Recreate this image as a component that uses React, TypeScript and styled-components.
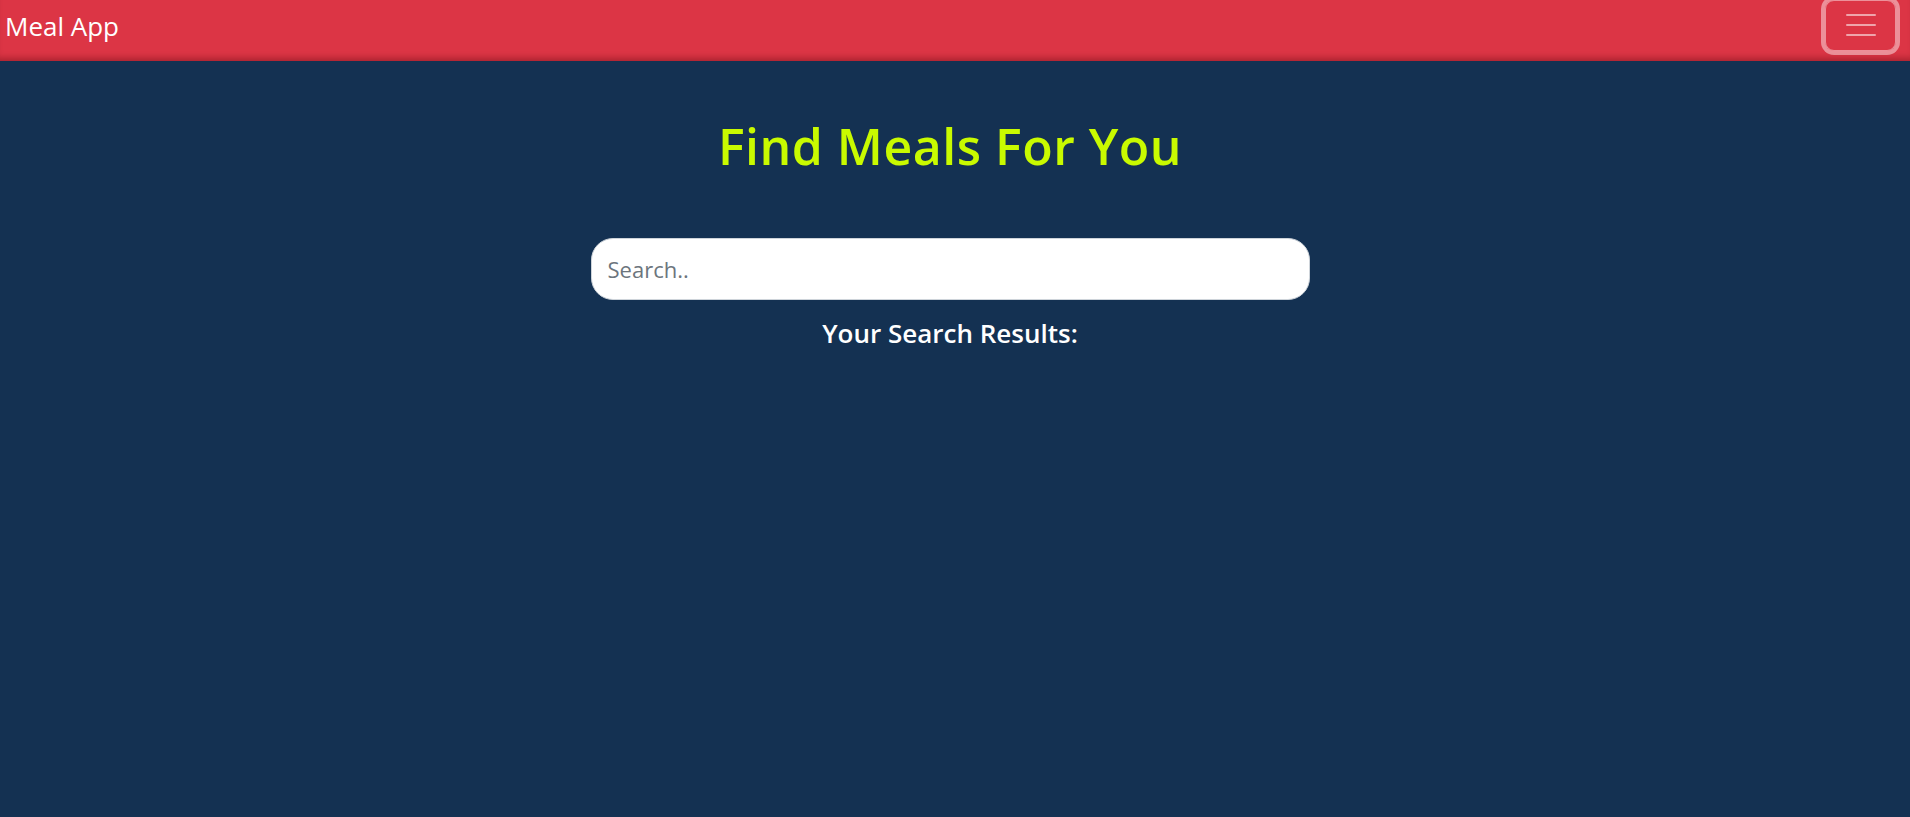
import React from "react";
import styled, { createGlobalStyle } from "styled-components";

const Global = createGlobalStyle`
  html, body { margin: 0; padding: 0; background: #143152; }
  body { font-family: "Open Sans", sans-serif; }
  * { box-sizing: border-box; }
`;

const Page = styled.div`
  min-height: 817px;
  background: #143152;
  display: flex;
  flex-direction: column;
`;

const NavBar = styled.nav`
  height: 61px;
  background: #dc3545;
  display: flex;
  align-items: center;
  justify-content: space-between;
  padding: 0 10px 0 5px;
  box-shadow: inset 0 -7px 6px -4px rgba(80, 0, 10, 0.35);
`;

const Brand = styled.a`
  color: #ffffff;
  font-family: "Open Sans", sans-serif;
  font-size: 26px;
  font-weight: 500;
  text-decoration: none;
  margin-top: -10px;
`;

const Toggler = styled.button`
  width: 71px;
  height: 51px;
  margin-top: -11px;
  border: 1px solid rgba(255, 255, 255, 0.45);
  border-radius: 9px;
  background: transparent;
  box-shadow: 0 0 0 4px rgba(255, 255, 255, 0.45);
  display: flex;
  flex-direction: column;
  align-items: center;
  justify-content: center;
  gap: 8px;
  padding: 0;
  margin-right: 4px;
  cursor: pointer;
`;

const Bar = styled.span`
  display: block;
  width: 30px;
  height: 2px;
  background: rgba(255, 255, 255, 0.55);
  border-radius: 1px;
`;

const Main = styled.main`
  display: flex;
  flex-direction: column;
  align-items: center;
  padding-right: 10px;
`;

const Title = styled.h1`
  margin: 50px 0 0;
  color: #c9fa00;
  font-family: "Open Sans", sans-serif;
  font-weight: 600;
  font-size: 50px;
  line-height: 70px;
  letter-spacing: 0.5px;
`;

const SearchInput = styled.input`
  margin-top: 57px;
  width: 719px;
  height: 62px;
  border: 1px solid #ced4da;
  border-radius: 22px;
  background: #ffffff;
  padding: 0 16px;
  font-family: "Open Sans", sans-serif;
  font-size: 22px;
  color: #212529;
  outline: none;
  &::placeholder {
    color: #6c757d;
  }
`;

const ResultsHeading = styled.h5`
  margin: 16px 0 0;
  color: #ffffff;
  font-family: "Open Sans", sans-serif;
  font-weight: 600;
  font-size: 26px;
  line-height: 34px;
`;

export default function App() {
  return (
    <Page>
      <Global />
      <NavBar>
        <Brand href="#">Meal App</Brand>
        <Toggler aria-label="Toggle navigation">
          <Bar />
          <Bar />
          <Bar />
        </Toggler>
      </NavBar>
      <Main>
        <Title>Find Meals For You</Title>
        <SearchInput placeholder="Search.." />
        <ResultsHeading>Your Search Results:</ResultsHeading>
      </Main>
    </Page>
  );
}
